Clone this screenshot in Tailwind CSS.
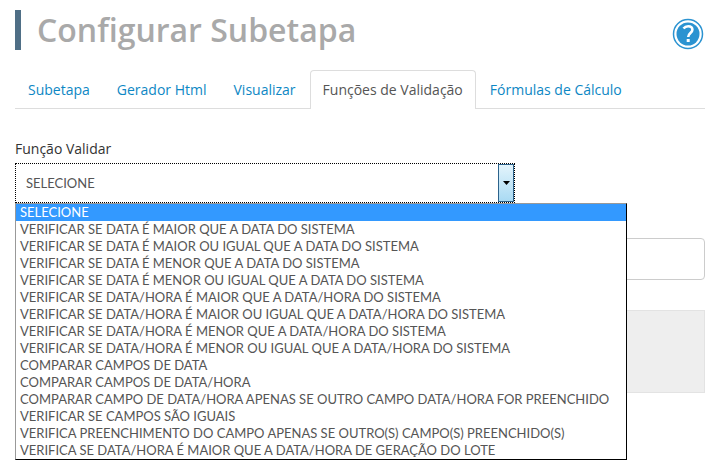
<!DOCTYPE html>
<html lang="pt-BR">
<head>
  <meta charset="UTF-8">
  <meta name="viewport" content="width=device-width, initial-scale=1.0">
  <title>Configurar Subetapa</title>
  <script src="https://cdn.jsdelivr.net/npm/@tailwindcss/browser@4"></script>
</head>
<body class="min-h-screen bg-white pr-[14px] pl-[15px] pt-[10px] font-['Open_Sans','Noto_Sans',sans-serif] text-sm text-[#555]">

  <!-- Header -->
  <header class="flex items-center justify-between">
    <h1 class="border-l-6 border-[#4f6f86] pl-4 text-[32px] leading-10 font-semibold text-[#a9a9a9]">Configurar Subetapa</h1>
    <button type="button" aria-label="Ajuda" class="mt-2 mr-px">
      <svg class="size-8" viewBox="0 0 32 32" fill="none">
        <circle cx="16" cy="16" r="14.5" stroke="#2b93d1" stroke-width="1.5"/>
        <circle cx="16" cy="16" r="11.5" fill="#2b93d1"/>
        <path d="M11.500 10.500c1.200-1.500 2.800-2.200 4.600-2.200 2.600 0 4.300 1.300 4.300 3.500 0 3-4.200 3.600-4.200 7.200" stroke="#fff" stroke-width="2.600"/>
        <rect x="14.700" y="21" width="3" height="3" fill="#fff"/>
      </svg>
    </button>
  </header>

  <!-- Tabs -->
  <nav class="mt-5 flex gap-px border-b border-[#ddd] text-[#0d87c4]">
    <a href="#" class="px-[13px] pt-[10px] pb-2 leading-5">Subetapa</a>
    <a href="#" class="px-[13px] pt-[10px] pb-2 leading-5">Gerador Html</a>
    <a href="#" class="px-[13px] pt-[10px] pb-2 leading-5">Visualizar</a>
    <a href="#" class="-mb-px rounded-t border border-b-0 border-[#ddd] bg-white px-3 pt-[9px] pb-2 leading-5 text-[#555]">Funções de Validação</a>
    <a href="#" class="px-[13px] pt-[10px] pb-2 leading-5">Fórmulas de Cálculo</a>
  </nav>

  <main>
    <label for="funcao" class="mt-[30px] block leading-5 text-[#333]">Função Validar</label>
    <div class="relative mt-1 font-['Lato',sans-serif] text-[13px]">
      <div class="flex h-10 w-full max-w-[500px] border border-dotted border-black">
        <select id="funcao" class="min-w-0 flex-1 appearance-none bg-white px-[10px] outline-none">
          <option>SELECIONE</option>
        </select>
        <span class="pointer-events-none flex w-4 items-center justify-center border border-[#2c628b] bg-linear-to-b from-[#e3f4fc] to-[#a9daf3]">
          <svg class="h-1 w-[7px]" viewBox="0 0 7 4"><path d="M0 0h7L3.500 4z" fill="#000"/></svg>
        </span>
      </div>

      <!-- Open list -->
      <ul id="lista" role="listbox" aria-label="Função Validar" class="absolute top-full left-0 w-[612px] border border-black border-t-[#999] border-l-[#999] bg-white leading-[17px] whitespace-nowrap">
        <li role="option" aria-selected="true" class="bg-[#3399ff] px-1 text-white">SELECIONE</li>
        <li role="option" class="px-1">VERIFICAR SE DATA É MAIOR QUE A DATA DO SISTEMA</li>
        <li role="option" class="px-1">VERIFICAR SE DATA É MAIOR OU IGUAL QUE A DATA DO SISTEMA</li>
        <li role="option" class="px-1">VERIFICAR SE DATA É MENOR QUE A DATA DO SISTEMA</li>
        <li role="option" class="px-1">VERIFICAR SE DATA É MENOR OU IGUAL QUE A DATA DO SISTEMA</li>
        <li role="option" class="px-1">VERIFICAR SE DATA/HORA É MAIOR QUE A DATA/HORA DO SISTEMA</li>
        <li role="option" class="px-1">VERIFICAR SE DATA/HORA É MAIOR OU IGUAL QUE A DATA/HORA DO SISTEMA</li>
        <li role="option" class="px-1">VERIFICAR SE DATA/HORA É MENOR QUE A DATA/HORA DO SISTEMA</li>
        <li role="option" class="px-1">VERIFICAR SE DATA/HORA É MENOR OU IGUAL QUE A DATA/HORA DO SISTEMA</li>
        <li role="option" class="px-1">COMPARAR CAMPOS DE DATA</li>
        <li role="option" class="px-1">COMPARAR CAMPOS DE DATA/HORA</li>
        <li role="option" class="px-1">COMPARAR CAMPO DE DATA/HORA APENAS SE OUTRO CAMPO DATA/HORA FOR PREENCHIDO</li>
        <li role="option" class="px-1">VERIFICAR SE CAMPOS SÃO IGUAIS</li>
        <li role="option" class="px-1">VERIFICA PREENCHIMENTO DO CAMPO APENAS SE OUTRO(S) CAMPO(S) PREENCHIDO(S)</li>
        <li role="option" class="px-1">VERIFICA SE DATA/HORA É MAIOR QUE A DATA/HORA DE GERAÇÃO DO LOTE</li>
      </ul>
    </div>

    <input type="text" aria-label="Mensagem" class="mt-[35px] block h-[42px] w-full rounded border border-[#ccc] px-3">
    <div class="mt-[30px] h-[83px] border border-[#e3e3e3] bg-[#eee]"></div>
  </main>

</body>
</html>
